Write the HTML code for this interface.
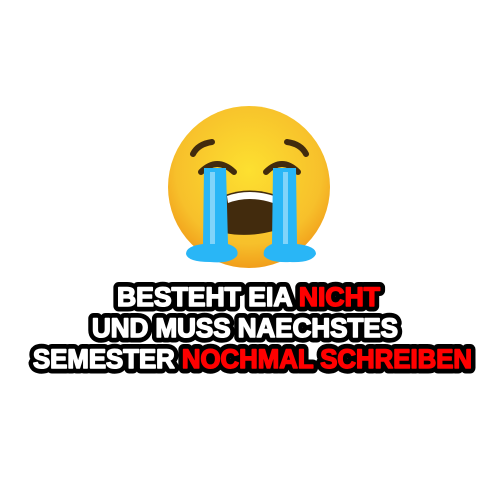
<!DOCTYPE html>
<html><head><style>html,body{margin:0;padding:0;background:#fff;width:500px;height:500px;overflow:hidden}</style></head>
<body>
<svg width="500" height="500" viewBox="0 0 500 500" xmlns="http://www.w3.org/2000/svg">
<defs>
<radialGradient id="f" cx="0.5" cy="0.4" r="0.6">
<stop offset="0" stop-color="#fde030"/><stop offset="0.75" stop-color="#f7c02b"/><stop offset="1" stop-color="#f19e1a"/>
</radialGradient>
</defs>
<circle cx="249" cy="187" r="81" fill="url(#f)"/>
<g fill="none" stroke="#422b0d" stroke-width="6" stroke-linecap="round">
<path d="M193 154 Q198 144 212 142"/>
<path d="M306 154 Q301 144 287 142"/>
<path d="M201 172 Q217 156 234 172"/>
<path d="M266 172 Q282 156 298 172"/>
</g>
<path d="M225 195 Q249 186 276 195 L277 230 Q249 238 225 233 Z" fill="#422b0d"/>
<path d="M227 196 Q249 188 274 196 L273 203 Q249 195 228 203 Z" fill="#fff"/>
<g fill="#29b6f6">
<path d="M204 168 L226 168 L228 244 Q240 248 237 256 Q230 264 210 262 Q188 262 186 254 Q186 246 203 244 Z"/>
<path d="M273 168 L296 168 L297 244 Q316 246 316 254 Q312 263 290 262 Q270 263 264 256 Q262 248 272 244 Z"/>
</g>
<g fill="#81d4fa">
<rect x="210" y="172" width="5" height="72"/>
<rect x="283" y="172" width="5" height="72"/>
</g>
<g font-family="Liberation Sans, sans-serif" font-weight="bold" font-size="27" stroke="#000" stroke-width="11" stroke-linejoin="round" fill="#000">
<text x="117" y="306" textLength="263" lengthAdjust="spacingAndGlyphs">BESTEHT EIA NICHT</text>
<text x="92" y="337" textLength="306" lengthAdjust="spacingAndGlyphs">UND MUSS NAECHSTES</text>
<text x="33" y="368" textLength="439" lengthAdjust="spacingAndGlyphs">SEMESTER NOCHMAL SCHREIBEN</text>
</g>
<g font-family="Liberation Sans, sans-serif" font-weight="bold" font-size="27" stroke-width="1.6" stroke-linejoin="round">
<text x="117" y="306" textLength="263" lengthAdjust="spacingAndGlyphs" fill="#fff" stroke="#fff">BESTEHT EIA <tspan fill="#f00" stroke="#f00">NICHT</tspan></text>
<text x="92" y="337" textLength="306" lengthAdjust="spacingAndGlyphs" fill="#fff" stroke="#fff">UND MUSS NAECHSTES</text>
<text x="33" y="368" textLength="439" lengthAdjust="spacingAndGlyphs" fill="#fff" stroke="#fff">SEMESTER <tspan fill="#f00" stroke="#f00">NOCHMAL SCHREIBEN</tspan></text>
</g>
</svg>
</body></html>
